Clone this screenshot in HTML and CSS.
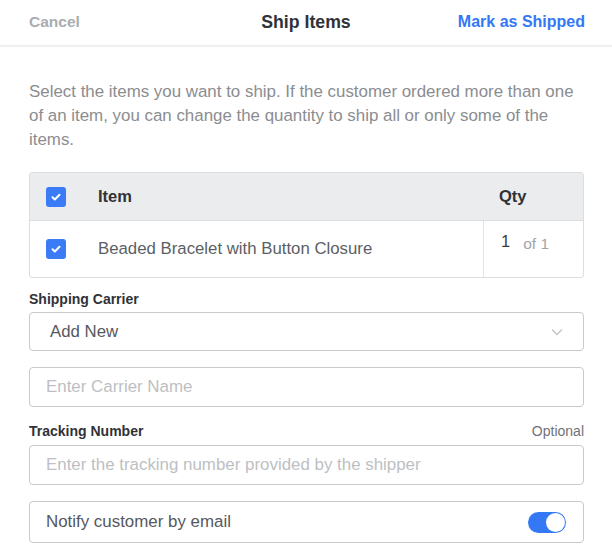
FILE: index.html
```html
<!DOCTYPE html>
<html>
<head>
<meta charset="utf-8">
<link rel="stylesheet" href="styles.css">
</head>
<body>
<header class="topbar">
  <span class="cancel">Cancel</span>
  <span class="title">Ship Items</span>
  <span class="action">Mark as Shipped</span>
</header>
<main class="content">
  <p class="intro">Select the items you want to ship. If the customer ordered more than one of an item, you can change the quantity to ship all or only some of the items.</p>

  <div class="table">
    <div class="row head">
      <div class="cell check"><span class="box"><svg viewBox="0 0 20 20" width="20" height="20"><path d="M6.5 10.3l2.3 2.2 4.7-4.7" fill="none" stroke="#fff" stroke-width="2" stroke-linecap="round" stroke-linejoin="round"/></svg></span></div>
      <div class="cell name">Item</div>
      <div class="cell qty">Qty</div>
    </div>
    <div class="row body">
      <div class="cell check"><span class="box"><svg viewBox="0 0 20 20" width="20" height="20"><path d="M6.5 10.3l2.3 2.2 4.7-4.7" fill="none" stroke="#fff" stroke-width="2" stroke-linecap="round" stroke-linejoin="round"/></svg></span></div>
      <div class="cell name">Beaded Bracelet with Button Closure</div>
      <div class="cell qty qtyinput"><span class="num">1</span><span class="of">of 1</span></div>
    </div>
  </div>

  <div class="label-row first"><span class="label">Shipping Carrier</span></div>
  <div class="field select">
    <span class="value">Add New</span>
    <svg class="chev" viewBox="0 0 12 8" width="12" height="8"><path d="M1 1.5l5 5 5-5" fill="none" stroke="#c4c4c8" stroke-width="1.3"/></svg>
  </div>
  <div class="field input gap"><span class="ph">Enter Carrier Name</span></div>

  <div class="label-row second"><span class="label">Tracking Number</span><span class="opt">Optional</span></div>
  <div class="field input"><span class="ph">Enter the tracking number provided by the shipper</span></div>

  <div class="field toggle-row gap2">
    <span class="value2">Notify customer by email</span>
    <span class="toggle"><span class="knob"></span></span>
  </div>
</main>
</body>
</html>
```

FILE: styles.css
```css
* { box-sizing: border-box; }
html, body { margin: 0; padding: 0; background: #fff; }
body {
  font-family: "Liberation Sans", Arial, sans-serif;
  color: #3a3d42;
  width: 612px;
  height: 560px;
  overflow: hidden;
}
.topbar {
  height: 47px;
  border-bottom: 2px solid #f0f0f0;
  display: flex;
  align-items: center;
  justify-content: space-between;
  padding: 0 27px 1px 29px;
  position: relative;
}
.cancel { color: #a9acb0; font-size: 15.5px; font-weight: bold; }
.title {
  position: absolute;
  left: 0; right: 0;
  text-align: center;
  font-size: 17.7px;
  font-weight: bold;
  color: #2f3237;
  pointer-events: none;
}
.action { color: #3478f6; font-size: 16px; font-weight: bold; }
.content { padding: 0 28px 0 29px; }
.intro {
  margin: 33px 0 20px;
  font-size: 16.9px;
  line-height: 24px;
  color: #8b8d90;
}
.table {
  border: 1px solid #dcdde0;
  border-radius: 3px;
  overflow: hidden;
}
.row { display: flex; align-items: stretch; }
.row.head { background: #ebecee; height: 48px; border-bottom: 1px solid #dcdde0; }
.row.body { height: 56px; }
.cell { display: flex; align-items: center; }
.check { width: 68px; padding-left: 16px; }
.box {
  width: 20px; height: 20px;
  border-radius: 3px;
  background: #3b7cf6;
  display: block;
}
.box svg { display: block; }
.name { flex: 1; font-size: 16.8px; }
.head .name { font-weight: bold; color: #2f3237; font-size: 16.5px; }
.body .name { color: #5c5f64; }
.qty { width: 100px; padding-left: 16px; }
.head .qty { font-weight: bold; font-size: 16.5px; color: #2f3237; }
.qtyinput {
  border-left: 1px solid #e2e3e6;
  align-items: flex-start;
  padding-top: 11px;
  padding-left: 17px;
}
.num { font-size: 16.5px; color: #3a3d42; }
.of { font-size: 15.5px; color: #a3a5a9; margin-left: 13px; margin-top: 3px; }
.label-row {
  display: flex;
  justify-content: space-between;
  align-items: baseline;
  margin: 11px 0 5px;
}
.label-row.first { margin-top: 13px; }
.label-row.second { margin-top: 16px; margin-bottom: 6px; }
.label { font-size: 14px; font-weight: bold; color: #2f3237; }
.opt { font-size: 14px; color: #707377; }
.field {
  height: 39px;
  border: 1px solid #c9cace;
  border-radius: 4px;
  display: flex;
  align-items: center;
  padding: 0 16px;
}
.input { height: 40px; }
.select { padding-left: 20px; justify-content: space-between; }
.value { font-size: 16.8px; color: #55585d; }
.chev { margin-right: 4px; }
.ph { font-size: 16.9px; color: #bdbfc3; }
.gap { margin-top: 16px; }
.gap2 { margin-top: 16px; height: 42px; justify-content: space-between; }
.value2 { font-size: 16.9px; color: #55585d; }
.toggle {
  width: 38px; height: 21px;
  border-radius: 11px;
  background: #3478f6;
  position: relative;
  margin-right: 1px;
}
.knob {
  position: absolute;
  right: 1px; top: 1px;
  width: 19px; height: 19px;
  border-radius: 50%;
  background: #fff;
}
```
